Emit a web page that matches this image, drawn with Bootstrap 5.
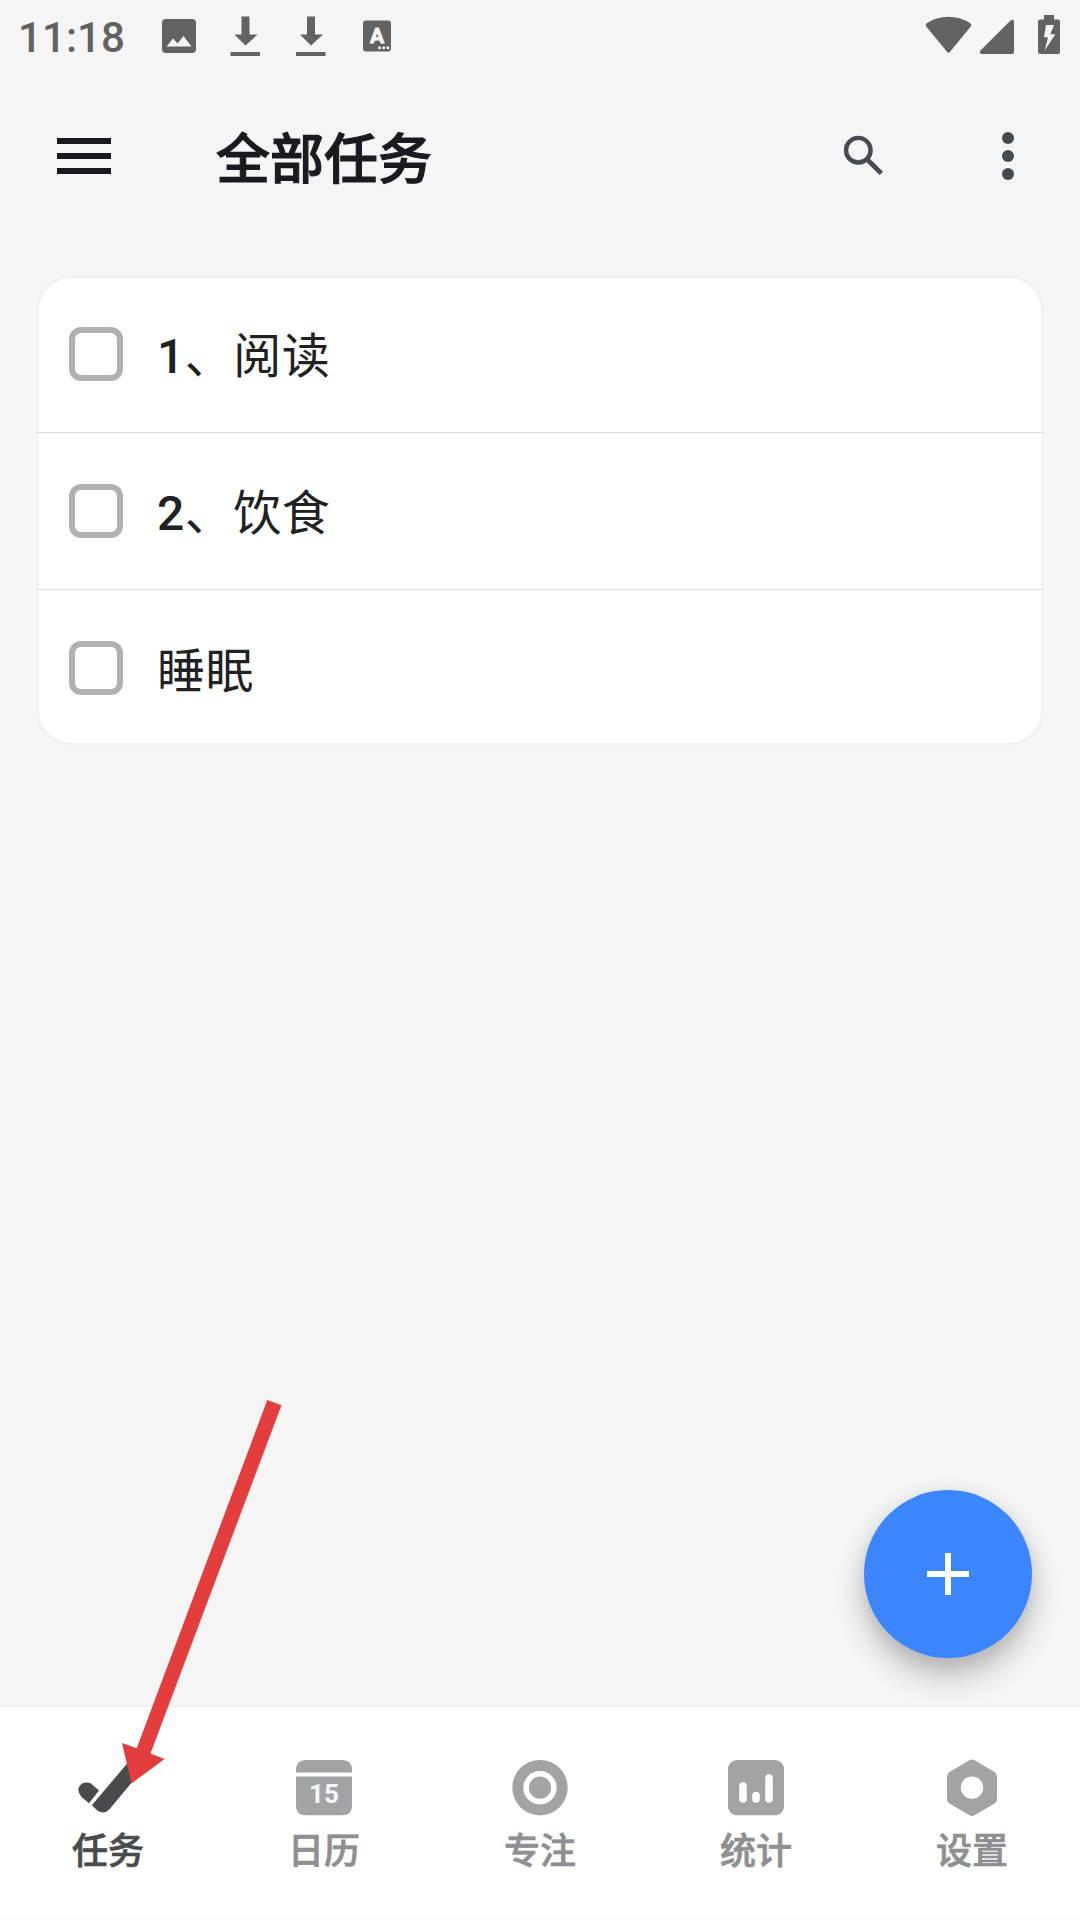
<!DOCTYPE html>
<html lang="zh-CN">
<head>
<meta charset="utf-8">
<meta name="viewport" content="width=device-width, initial-scale=1">
<title>全部任务</title>
<link href="https://cdn.jsdelivr.net/npm/bootstrap@5.3.0/dist/css/bootstrap.min.css" rel="stylesheet">
<style>
  body { background: #f5f5f5; font-family: Roboto, "Noto Sans CJK SC", sans-serif; color: #1a1b20; }
  svg { display: block; flex: none; }
  .phone { width: 1080px; height: 1920px; background: #f5f5f5; overflow: hidden; }
  .status-bar { height: 72px; padding: 0 20px 0 18px; color: #626262; }
  .clock { font-size: 42px; line-height: 76px; letter-spacing: .1px; font-weight: 500; width: 144px; }
  .status-icons { gap: 34px; }
  .app-header { height: 168px; padding: 0 48px 0 57px; }
  .app-title { font-size: 54px; line-height: 72px; font-weight: 500; -webkit-text-stroke: 1.1px currentColor; margin: 0 0 0 105px; padding-top: 9px; }
  .tool-icons { gap: 101px; color: #484a52; }
  .task-card { margin: 35px 36px 0; border-radius: 36px; border: 3px solid #f2f2f2; background: #fff; }
  .task-row { height: 157px; padding: 0 0 1px 33px; gap: 34px; margin: 0 -3px; }
  .task-row + .task-row { border-top: 1px solid #dedede; }
  .task-row:first-child { height: 154px; padding-bottom: 3px; }
  .task-row:last-child { height: 154px; padding-bottom: 0; padding-top: 2px; }
  .task-row .form-check-input { width: 54px; height: 54px; margin: 0; border: 6px solid #b1b1b1; border-radius: 12px; background: #fff; flex: none; }
  .task-name { font-size: 48px; line-height: 60px; letter-spacing: .5px; color: #212121; padding-top: 6px; }
  .task-row:last-child .task-name { padding-top: 8px; }
  .num { font-weight: 500; }
  .fab { right: 48px; bottom: 262px; width: 168px; height: 168px; background: #3b86ff; border: 0; border-radius: 50%;
         box-shadow: 0 18px 30px rgba(0,0,0,.24), 0 3px 20px rgba(0,0,0,.08); }
  .tab-bar { height: 214px; background: #fff; border-top: 1px solid #ebebeb; border-bottom: 1px solid #f8f8f8; padding-top: 53px; }
  .tab { color: #8e8f91; padding: 0; gap: 9px; text-decoration: none; }
  .tab.active { color: #494a4d; }
  .tab span { font-size: 36px; line-height: 54px; font-weight: 500; -webkit-text-stroke: .7px currentColor; }
  .pointer-arrow { left: 0; top: 0; pointer-events: none; z-index: 5; }
</style>
<script src="https://cdn.jsdelivr.net/npm/bootstrap@5.3.0/dist/js/bootstrap.bundle.min.js"></script>
</head>
<body>
<div class="phone position-relative d-flex flex-column">

  <div class="status-bar d-flex justify-content-between">
    <div class="status-icons d-flex">
      <div class="d-flex">
        <div class="clock">11:18</div>
        <svg width="34" height="72" viewBox="162 0 34 72"><rect x="162" y="19" width="34" height="34" rx="4" fill="currentColor"/><path d="M166.500 46.500L173 38.500L177.500 43.500L183.500 36L191.500 46.500Z" fill="#f5f5f5"/></svg>
      </div>
      <svg width="30" height="72" viewBox="230 0 30 72"><path d="M241.500 16.500h8v18h8L245.500 45.500L234.500 34.500h7zM230.500 52h29.500v4h-29.500z" fill="currentColor"/></svg>
      <svg width="32" height="72" viewBox="228.500 0 32 72"><path d="M241.500 16.500h8v18h8L245.500 45.500L234.500 34.500h7zM230.500 52h29.500v4h-29.500z" fill="currentColor"/></svg>
      <svg width="32" height="72" viewBox="360 0 32 72"><rect x="363" y="20.500" width="28" height="31" rx="3" fill="currentColor"/><text x="377" y="43" text-anchor="middle" font-size="21" font-weight="700" stroke="#f5f5f5" stroke-width=".8" fill="#f5f5f5">A</text><g fill="#f5f5f5"><circle cx="379.500" cy="47.700" r="1.500"/><circle cx="383.700" cy="47.700" r="1.500"/><circle cx="387.900" cy="47.700" r="1.500"/></g></svg>
    </div>
    <svg width="135" height="72" viewBox="925 0 135 72" fill="currentColor">
      <path d="M926.600 23.200Q948.500 10.500 970.400 23.200Q972 24.500 970.800 26.500L950 51.700Q948.500 54 947 51.700L926.200 26.500Q925 24.500 926.600 23.200Z"/>
      <path d="M980.500 50.500L1010.500 20.500Q1014 18.500 1014 22V52Q1014 54 1012 54H982Q978.500 53.500 980.500 50.500Z"/>
      <path fill-rule="evenodd" d="M1044 15h10v4.500h4q2 0 2 2V52q0 2-2 2h-18q-2 0-2-2V21.500q0-2 2-2h4zM1046 25L1044 37.200H1048L1044.700 50.500L1055.300 34.200H1050.300L1054 25z"/>
    </svg>
  </div>

  <header class="app-header d-flex align-items-center justify-content-between">
    <div class="d-flex align-items-center">
      <svg width="54" height="36" viewBox="0 0 54 36" fill="#1a1b20"><path d="M0 0h54v6H0zM0 15h54v6H0zM0 30h54v6H0z"/></svg>
      <h1 class="app-title">全部任务</h1>
    </div>
    <div class="tool-icons d-flex align-items-center">
      <svg width="40" height="48" viewBox="843 132 40 48"><circle cx="858.300" cy="150.200" r="12.300" fill="none" stroke="currentColor" stroke-width="4.400"/><path d="M867.500 159.800L881.300 173.400" stroke="currentColor" stroke-width="4.800"/></svg>
      <svg width="48" height="48" viewBox="984 132 48 48" fill="currentColor"><circle cx="1008" cy="138" r="6"/><circle cx="1008" cy="156" r="6"/><circle cx="1008" cy="174" r="6"/></svg>
    </div>
  </header>

  <main class="flex-grow-1">
    <div class="task-card">
      <label class="task-row d-flex align-items-center"><input class="form-check-input" type="checkbox"><span class="task-name"><span class="num">1</span>、阅读</span></label>
      <label class="task-row d-flex align-items-center"><input class="form-check-input" type="checkbox"><span class="task-name"><span class="num">2</span>、饮食</span></label>
      <label class="task-row d-flex align-items-center"><input class="form-check-input" type="checkbox"><span class="task-name">睡眠</span></label>
    </div>
  </main>

  <button class="fab btn position-absolute d-flex align-items-center justify-content-center" aria-label="添加">
    <svg width="42" height="42" viewBox="0 0 42 42"><path d="M18 0h6v18h18v6H24v18h-6V24H0v-6h18z" fill="#fff"/></svg>
  </button>

  <nav class="tab-bar nav nav-fill flex-nowrap">
    <a class="tab active nav-item d-flex flex-column align-items-center w-100" href="#">
      <svg width="60" height="56" viewBox="78 1760 60 56" fill="currentColor"><path d="M89 1803.200L81.500 1797Q77 1792 79 1787Q83 1780.500 91 1783.500L99 1790.500Z"/><path d="M91.800 1805.300L128 1762.500L138 1775L109.500 1809.200Q104.500 1814.500 98 1811Z"/></svg>
      <span>任务</span></a>
    <a class="tab nav-item d-flex flex-column align-items-center w-100" href="#">
      <svg width="56" height="56" viewBox="0 0 56 56" fill="#a2a3a5"><path d="M0 12.500V10Q0 0 10 0H46Q56 0 56 10V12.500zM0 16.500H56V46Q56 55.300 46 55.300H10Q0 55.300 0 46z"/><text x="28" y="43" text-anchor="middle" font-size="26" font-weight="700" fill="#f8f8ff">15</text></svg>
      <span>日历</span></a>
    <a class="tab nav-item d-flex flex-column align-items-center w-100" href="#">
      <svg width="56" height="56" viewBox="0 0 56 56" fill="#a2a3a5"><circle cx="28" cy="27.700" r="27.700"/><circle cx="28" cy="27.700" r="13.900" fill="none" stroke="#fff" stroke-width="5.600"/></svg>
      <span>专注</span></a>
    <a class="tab nav-item d-flex flex-column align-items-center w-100" href="#">
      <svg width="56" height="56" viewBox="0 0 56 56" fill="#a2a3a5"><rect y="0" width="56" height="55.300" rx="9"/><path d="M15 26V39M28 35.500V39M41 18V39" stroke="#fff" stroke-width="7.600" stroke-linecap="round"/></svg>
      <span>统计</span></a>
    <a class="tab nav-item d-flex flex-column align-items-center w-100" href="#">
      <svg width="56" height="56" viewBox="0 0 56 56" overflow="visible" fill="#a2a3a5"><path d="M25.500 .2Q28-1.200 30.500 .2L50.500 12Q53 13.500 53 16.500V39Q53 42 50.500 43.500L30.500 55.200Q28 56.600 25.500 55.200L5.500 43.500Q3 42 3 39V16.500Q3 13.500 5.500 12z"/><circle cx="28" cy="27.700" r="11.200" fill="#fff"/></svg>
      <span>设置</span></a>
  </nav>

  <svg class="pointer-arrow position-absolute" width="1080" height="1920" viewBox="0 0 1080 1920"><path d="M267.300 1400L281.500 1405.200L150.500 1753.500L164.500 1759L131.500 1783.500L122 1743L136.700 1748.300Z" fill="#e33d3d"/></svg>
</div>
</body>
</html>
